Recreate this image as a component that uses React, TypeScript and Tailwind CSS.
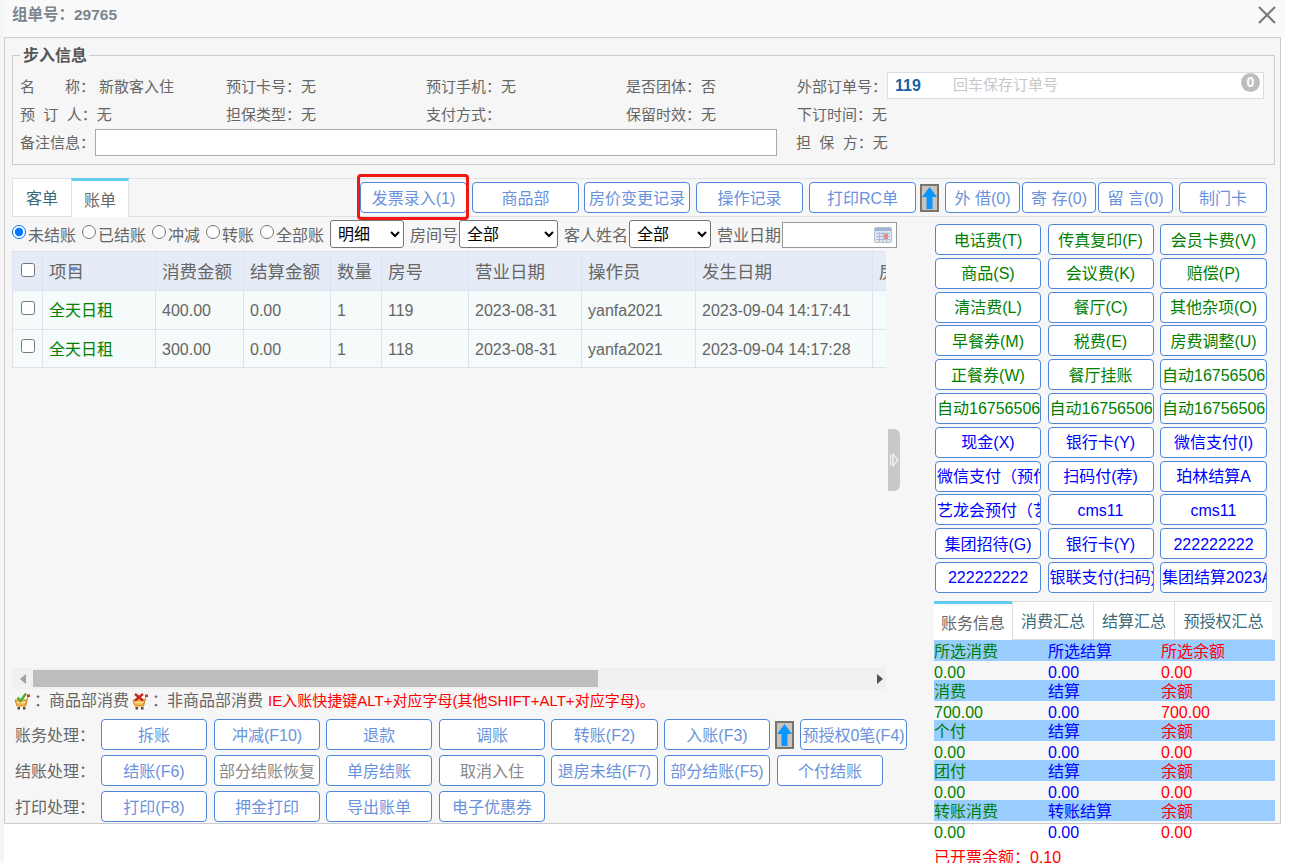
import type { ReactNode } from 'react';

const fontStack = { fontFamily: '"Liberation Sans", "Noto Sans CJK SC", sans-serif' };

function Btn({ children, className = '', color = 'text-[#6a92dc]' }: { children: ReactNode; className?: string; color?: string }) {
  return (
    <button className={`shrink-0 h-[31px] bg-white border border-[#4f86d8] rounded-[4px] px-px pt-[2px] whitespace-nowrap overflow-hidden text-[16px] text-center ${color} ${className}`}>
      {children}
    </button>
  );
}

function UpArrow({ className = '' }: { className?: string }) {
  return (
    <div className={`shrink-0 w-[19px] h-[28px] bg-[#c9c5bd] border-2 border-[#77756f] flex items-center justify-center ${className}`}>
      <svg width="15" height="24" viewBox="0 0 15 24">
        <path d="M7.5 1 L15 11 H10.5 V23 H4.5 V11 H0 Z" fill="#0a95ff" />
      </svg>
    </div>
  );
}

function Cart({ bad }: { bad?: boolean }) {
  return (
    <svg width="17" height="17" viewBox="0 0 17 17" className="shrink-0">
      <path d="M1 7 H13 L11.5 13 H3 Z" fill="#f5b547" stroke="#d08a20" strokeWidth="1" />
      <path d="M3 9.5 H11.5" stroke="#fde9b8" strokeWidth="1.2" />
      <path d="M11.5 12.5 L14 3.5" stroke="#c88a30" strokeWidth="1" />
      <rect x="13" y="1.5" width="3" height="2.5" fill="#e03020" />
      <rect x="3.5" y="14" width="2.5" height="2.5" fill="#5a4a30" />
      <rect x="9" y="14" width="2.5" height="2.5" fill="#5a4a30" />
      {bad ? (
        <path d="M3 1 L11 7.5 M11 1 L3 7.5" stroke="#c8281c" strokeWidth="2.4" />
      ) : (
        <path d="M3.5 4.5 L6.5 8 L12 0.5" stroke="#58a828" strokeWidth="2.4" fill="none" />
      )}
    </svg>
  );
}

function Calendar() {
  return (
    <svg width="18" height="16" viewBox="0 0 18 16">
      <rect x="0.5" y="0.5" width="17" height="15" rx="1.5" fill="#dfe6f0" stroke="#b4bfcd" />
      <rect x="1" y="1" width="16" height="3" fill="#9db4d6" />
      <path d="M2 6.5 H16 M2 9.5 H16 M2 12.5 H16 M5.5 5 V15 M9 5 V15 M12.5 5 V15" stroke="#a9bbd6" strokeWidth="1" />
      <rect x="10" y="7" width="4" height="5" fill="#e89088" />
    </svg>
  );
}

function Radio({ label, checked, className }: { label: string; checked?: boolean; className: string }) {
  return (
    <label className={`flex items-center shrink-0 ${className}`}>
      <input type="radio" name="bill" defaultChecked={checked} className="w-[14px] h-[14px] m-0 mr-[2px] -translate-y-[2px]" />
      <span className="translate-y-[2px]">{label}</span>
    </label>
  );
}

const selectCls = 'h-[28px] bg-white border border-[#767676] rounded-[3px] text-black text-[16px] pl-[3px] pt-px shrink-0';

const feeRows = [
  ['电话费(T)', '传真复印(F)', '会员卡费(V)'],
  ['商品(S)', '会议费(K)', '赔偿(P)'],
  ['清洁费(L)', '餐厅(C)', '其他杂项(O)'],
  ['早餐券(M)', '税费(E)', '房费调整(U)'],
  ['正餐券(W)', '餐厅挂账', '自动16756506'],
  ['自动16756506', '自动16756506', '自动16756506'],
];

const payRows = [
  ['现金(X)', '银行卡(Y)', '微信支付(I)'],
  ['微信支付（预付）', '扫码付(荐)', '珀林结算A'],
  ['艺龙会预付（艺龙）', 'cms11', 'cms11'],
  ['集团招待(G)', '银行卡(Y)', '222222222'],
  ['222222222', '银联支付(扫码)', '集团结算2023A'],
];

const summary = [
  ['所选消费', '所选结算', '所选余额', '0.00', '0.00', '0.00'],
  ['消费', '结算', '余额', '700.00', '0.00', '700.00'],
  ['个付', '结算', '余额', '0.00', '0.00', '0.00'],
  ['团付', '结算', '余额', '0.00', '0.00', '0.00'],
  ['转账消费', '转账结算', '余额', '0.00', '0.00', '0.00'],
];

const bills = [
  ['400.00', '119', '2023-09-04 14:17:41'],
  ['300.00', '118', '2023-09-04 14:17:28'],
];

const cell = 'border border-[#dde3ec] px-[6px] pt-[3px] text-left font-normal whitespace-nowrap overflow-hidden';
const boxCell = 'border border-[#dde3ec] px-[8px] whitespace-nowrap overflow-hidden';

export default function App() {
  return (
    <div style={fontStack} className="w-[1290px] h-[863px] overflow-hidden bg-white border-l-[4px] border-[#f5f5f5] text-[16px] text-[#666]">
      <div className="h-[37px] w-[1281px] bg-[#f9f9f9] flex items-center justify-between pl-[8px] pr-[9px]">
        <span className="text-[15.5px] font-bold text-[#7b8590] -translate-y-[4px]">组单号：29765</span>
        <svg width="18" height="18" viewBox="0 0 18 18" className="-translate-y-[4px]">
          <path d="M1 1 L17 17 M17 1 L1 17" stroke="#777" strokeWidth="2" />
        </svg>
      </div>

      <div className="w-[1277px] h-[787px] bg-[#f6f6f6] border border-[#ccc]">
        <fieldset className="mt-[5px] ml-[7px] w-[1263px] border border-[#ccc] px-[7px] pb-[7px] text-[15px] text-[#666]">
          <legend className="pl-[3px] pr-[2px] text-[16px] leading-[24px] font-bold text-[#555]">
            <span className="inline-block translate-y-px">步入信息</span>
          </legend>
          <div className="pt-[5px]">
            <div className="h-[28px] flex items-start [&>span]:translate-y-[4px]">
              <span className="w-[206px] whitespace-pre">名　　称：<span className="ml-[4px]">新散客入住</span></span>
              <span className="w-[200px]">预订卡号：无</span>
              <span className="w-[200px]">预订手机：无</span>
              <span className="w-[171px]">是否团体：否</span>
              <span className="w-[90px]">外部订单号：</span>
              <div className="relative w-[377px] h-[27px] bg-white border border-[#ddd] flex items-center pl-[7px]">
                <span className="w-[58px] text-[16px] font-bold text-[#1a5fa0]">119</span>
                <span className="text-[#c8c8c8]">回车保存订单号</span>
                <span className="absolute right-[3px] top-0 w-[19px] h-[19px] rounded-full bg-[#bdbdbd] text-white text-[14px] font-bold flex items-center justify-center">0</span>
              </div>
            </div>
            <div className="h-[29px] flex items-center [&>span]:translate-y-px">
              <span className="w-[206px] whitespace-pre">预  订  人：无</span>
              <span className="w-[200px]">担保类型：无</span>
              <span className="w-[200px]">支付方式：</span>
              <span className="w-[171px]">保留时效：无</span>
              <span>下订时间：无</span>
            </div>
            <div className="h-[28px] flex items-start">
              <span className="w-[75px] translate-y-[3px]">备注信息：</span>
              <input className="w-[682px] h-[27px] bg-white border border-[#aaa]" />
              <span className="ml-[19px] whitespace-pre translate-y-[3px]">担  保  方：无</span>
            </div>
          </div>
        </fieldset>

        <div className="relative mt-[13px] ml-[7px] w-[1255px] h-[39px] border-y border-[#dde3e8] flex items-center">
          <div className="flex h-[37px] self-start">
            <div className="w-[59px] pt-[3px] bg-white border-l border-[#dde3e8] flex items-center justify-center text-[#3a6a7a]">客单</div>
            <div className="w-[58px] h-[39px] -mt-px pt-[3px] bg-white border-t-[3px] border-x border-x-[#dde3e8] border-t-[#66ccee] flex items-center justify-center">账单</div>
          </div>
          <Btn className="ml-[231px] w-[107px]">发票录入(1)</Btn>
          <Btn className="ml-[5px] w-[107px]">商品部</Btn>
          <Btn className="ml-[5px] w-[106px]">房价变更记录</Btn>
          <Btn className="ml-[6px] w-[107px]">操作记录</Btn>
          <Btn className="ml-[6px] w-[107px]">打印RC单</Btn>
          <UpArrow className="ml-[4px]" />
          <Btn className="ml-[6px] w-[75px]">外 借(0)</Btn>
          <Btn className="ml-[2px] w-[74px]">寄 存(0)</Btn>
          <Btn className="ml-[2px] w-[75px]">留 言(0)</Btn>
          <Btn className="ml-[6px] w-[88px]">制门卡</Btn>
          <div className="absolute left-[345px] -top-[5px] w-[112px] h-[46px] border-[3px] border-[#f01810] rounded-[4px]" />
        </div>

        <div className="flex ml-[7px]">
          <div className="relative w-[895px] shrink-0">
            <div className="mt-[3px] h-[28px] flex items-center whitespace-nowrap">
              <Radio label="未结账" checked className="" />
              <Radio label="已结账" className="ml-[6px]" />
              <Radio label="冲减" className="ml-[6px]" />
              <Radio label="转账" className="ml-[6px]" />
              <Radio label="全部账" className="ml-[6px]" />
              <select className={`${selectCls} ml-[6px] w-[74px]`}><option>明细</option></select>
              <span className="ml-[6px] translate-y-[2px]">房间号</span>
              <select className={`${selectCls} ml-px w-[99px]`}><option>全部</option></select>
              <span className="ml-[6px] translate-y-[2px]">客人姓名</span>
              <select className={`${selectCls} ml-px w-[82px]`}><option>全部</option></select>
              <span className="ml-[6px] translate-y-[2px]">营业日期</span>
              <div className="ml-px w-[115px] h-[26px] mt-[2px] bg-white border border-[#999] flex items-center justify-end pr-[4px]">
                <Calendar />
              </div>
            </div>

            <div className="mt-[3px] w-[874px] h-[417px] overflow-hidden">
              <table className="table-fixed border-collapse w-[960px]">
                <colgroup>
                  <col className="w-[30px]" />
                  <col className="w-[113px]" />
                  <col className="w-[88px]" />
                  <col className="w-[87px]" />
                  <col className="w-[51px]" />
                  <col className="w-[87px]" />
                  <col className="w-[113px]" />
                  <col className="w-[114px]" />
                  <col className="w-[177px]" />
                  <col className="w-[100px]" />
                </colgroup>
                <thead>
                  <tr className="h-[39px] bg-[#e6ecf7] text-[17.5px]">
                    <th className={boxCell}><input type="checkbox" className="block w-[14px] h-[14px] m-0 -translate-y-px" /></th>
                    <th className={cell}>
                      <span className="relative inline-block">
                        项目
                        <span className="absolute left-[21px] top-[8px] w-0 h-0 border-x-[4px] border-t-[5px] border-x-transparent border-t-[#6c8fd0]" />
                      </span>
                    </th>
                    <th className={cell}>消费金额</th>
                    <th className={cell}>结算金额</th>
                    <th className={cell}>数量</th>
                    <th className={cell}>房号</th>
                    <th className={cell}>营业日期</th>
                    <th className={cell}>操作员</th>
                    <th className={cell}>发生日期</th>
                    <th className={cell}>房态</th>
                  </tr>
                </thead>
                <tbody>
                  {bills.map((b) => (
                    <tr key={b[1]} className="h-[38.5px] bg-[#f5fafa]">
                      <td className={boxCell}><input type="checkbox" className="block w-[14px] h-[14px] m-0 -translate-y-[2px]" /></td>
                      <td className={`${cell} text-[#008000]`}>全天日租</td>
                      <td className={cell}>{b[0]}</td>
                      <td className={cell}>0.00</td>
                      <td className={cell}>1</td>
                      <td className={cell}>{b[1]}</td>
                      <td className={cell}>2023-08-31</td>
                      <td className={cell}>yanfa2021</td>
                      <td className={cell}>{b[2]}</td>
                      <td className={cell}></td>
                    </tr>
                  ))}
                </tbody>
              </table>
            </div>

            <div className="w-[874px] h-[21px] bg-[#f0f0f0] flex items-center">
              <div className="w-[21px] flex justify-center">
                <svg width="6" height="10" viewBox="0 0 6 10"><path d="M6 0 V10 L0 5 Z" fill="#a0a0a0" /></svg>
              </div>
              <div className="w-[565px] h-[17px] bg-[#bdbdbd]" />
              <div className="flex-1 flex justify-end pr-[3px]">
                <svg width="6" height="10" viewBox="0 0 6 10"><path d="M0 0 V10 L6 5 Z" fill="#505050" /></svg>
              </div>
            </div>

            <div className="h-[24px] flex items-center whitespace-nowrap pl-[2px]">
              <Cart />
              <span className="ml-[3px]">：</span>
              <span className="-ml-[1px]">商品部消费</span>
              <span className="ml-[3px]"><Cart bad /></span>
              <span className="ml-[3px]">：</span>
              <span className="-ml-[1px]">非商品部消费</span>
              <span className="ml-[5px] text-[15px] text-[#f00]">IE入账快捷键ALT+对应字母(其他SHIFT+ALT+对应字母)。</span>
            </div>

            <div className="mt-[6px] flex flex-col gap-[5px] pl-[3px]">
              <div className="flex items-center">
                <span className="w-[86px] shrink-0 translate-y-px">账务处理：</span>
                <Btn className="w-[106px]">拆账</Btn>
                <Btn className="ml-[7px] w-[106px]">冲减(F10)</Btn>
                <Btn className="ml-[6px] w-[106px]">退款</Btn>
                <Btn className="ml-[7px] w-[106px]">调账</Btn>
                <Btn className="ml-[6px] w-[107px]">转账(F2)</Btn>
                <Btn className="ml-[6px] w-[106px]">入账(F3)</Btn>
                <UpArrow className="ml-[5px]" />
                <Btn className="ml-[6px] w-[107px]">预授权0笔(F4)</Btn>
              </div>
              <div className="flex items-center">
                <span className="w-[86px] shrink-0 translate-y-px">结账处理：</span>
                <Btn className="w-[106px]">结账(F6)</Btn>
                <Btn className="ml-[7px] w-[106px]" color="text-[#888]">部分结账恢复</Btn>
                <Btn className="ml-[6px] w-[106px]">单房结账</Btn>
                <Btn className="ml-[7px] w-[106px]" color="text-[#888]">取消入住</Btn>
                <Btn className="ml-[6px] w-[107px]">退房未结(F7)</Btn>
                <Btn className="ml-[6px] w-[106px]">部分结账(F5)</Btn>
                <Btn className="ml-[7px] w-[106px]">个付结账</Btn>
              </div>
              <div className="flex items-center">
                <span className="w-[86px] shrink-0 translate-y-px">打印处理：</span>
                <Btn className="w-[106px]">打印(F8)</Btn>
                <Btn className="ml-[7px] w-[106px]">押金打印</Btn>
                <Btn className="ml-[6px] w-[106px]">导出账单</Btn>
                <Btn className="ml-[7px] w-[106px]">电子优惠券</Btn>
              </div>
            </div>

            {/* collapse handle sits over the table's right edge */}
            <div className="absolute left-[876px] top-[212px] w-[12px] h-[62px] bg-[#c8c8c8] rounded-r-[6px] flex items-center justify-center">
              <svg width="9" height="14" viewBox="0 0 9 14"><path d="M0.5 1 V13 M3 1 V13 L8 7 Z" fill="none" stroke="#eee" strokeWidth="1.5" /></svg>
            </div>
          </div>

          <div className="ml-[27px] w-[341px] shrink-0 pt-[7px]">
            <div className="grid grid-cols-[106px_106px_107px] gap-x-[6.5px] gap-y-[2.8px] pl-px">
              {feeRows.flat().map((t, i) => (
                <Btn key={i} className="w-full" color="text-[#008000]">{t}</Btn>
              ))}
              {payRows.flat().map((t, i) => (
                <Btn key={i} className="w-full" color="text-[#0000ff]">{t}</Btn>
              ))}
            </div>

            <div className="mt-[8px] w-[338px] h-[39px] flex bg-white border-t border-[#ddd]">
              <div className="w-[78px] -mt-px pt-[5px] border-t-[3px] border-[#66ccee] flex items-center justify-center">账务信息</div>
              <div className="w-[81px] pt-[3px] border-l border-b border-[#ddd] flex items-center justify-center text-[#3a6a7a]">消费汇总</div>
              <div className="w-[81px] pt-[3px] border-l border-b border-[#ddd] flex items-center justify-center text-[#3a6a7a]">结算汇总</div>
              <div className="w-[98px] pt-[3px] border-l border-b border-[#ddd] flex items-center justify-center text-[#3a6a7a]">预授权汇总</div>
            </div>

            {summary.map((r, i) => (
              <div key={i}>
                <div className="h-[21px] bg-[#99ccff] grid grid-cols-[114px_113px_1fr] items-center">
                  <span className="text-[#008000]">{r[0]}</span>
                  <span className="text-[#0000ff]">{r[1]}</span>
                  <span className="text-[#ff0000]">{r[2]}</span>
                </div>
                <div className="h-[19px] grid grid-cols-[114px_113px_1fr] items-center">
                  <span className="text-[#008000]">{r[3]}</span>
                  <span className="text-[#0000ff]">{r[4]}</span>
                  <span className="text-[#ff0000]">{r[5]}</span>
                </div>
              </div>
            ))}
            <div className="mt-[7px] h-[22px] flex items-center text-[#ff0000]">已开票余额：0.10</div>
          </div>
        </div>
      </div>
    </div>
  );
}
